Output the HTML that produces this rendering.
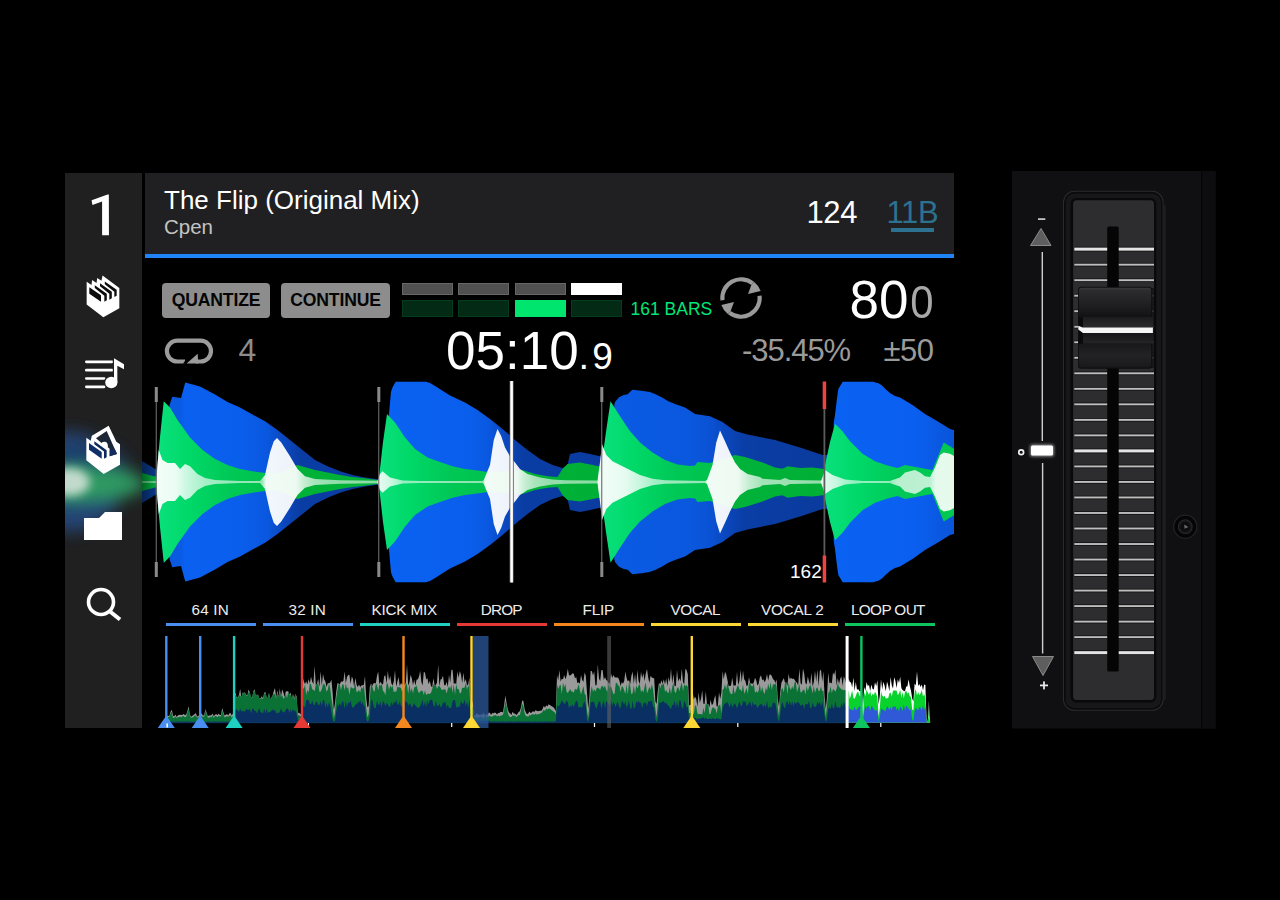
<!DOCTYPE html>
<html><head><meta charset="utf-8"><title>Deck</title>
<style>
*{margin:0;padding:0;box-sizing:border-box}
html,body{width:1280px;height:900px;background:#000;overflow:hidden}
body{position:relative;font-family:"Liberation Sans",sans-serif;color:#fff}
.abs{position:absolute}
.t{position:absolute;white-space:nowrap;line-height:1}
#side{left:65px;top:173px;width:77px;height:555px;background:#202020;overflow:hidden}
#head{left:145px;top:173px;width:809px;height:82px;background:#202022}
#hline{left:145px;top:254px;width:809px;height:4px;background:#1f84f6}
.btn{position:absolute;top:282.5px;height:35px;background:#8d8d8d;border-radius:4px;color:#050505;font-weight:bold;font-size:17.6px;line-height:35.5px;text-align:center;letter-spacing:-0.15px}
.seg{position:absolute;width:51px}
.cl{position:absolute;top:600.5px;letter-spacing:-0.2px;width:110px;text-align:center;font-size:15.3px;color:#ececec;line-height:18px;white-space:nowrap}
.cb{position:absolute;top:623px;height:3px;width:90px}
</style></head><body>

<!-- sidebar -->
<div id="side" class="abs">
<svg class="abs" style="left:0;top:0" width="77" height="555" viewBox="65 173 77 555">
 <defs><filter id="bl" x="-50%" y="-50%" width="200%" height="200%"><feGaussianBlur stdDeviation="8"/></filter><filter id="bl2" x="-100%" y="-100%" width="300%" height="300%"><feGaussianBlur stdDeviation="5"/></filter></defs>
 <g filter="url(#bl)">
  <ellipse cx="68" cy="482" rx="56" ry="50" fill="#23487c" opacity="0.92"/>
  <ellipse cx="92" cy="472" rx="40" ry="30" fill="#1b3a63" opacity="0.55"/>
  <ellipse cx="80" cy="484" rx="66" ry="17" fill="#2d9a62"/>
 </g>
 <g filter="url(#bl2)">
  <ellipse cx="69" cy="482" rx="21" ry="14" fill="#c2dacc"/>
 </g>
</svg>
</div>
<svg class="abs" style="left:0;top:0" width="160" height="260" viewBox="0 0 160 260"><path fill="#fff" d="M108.85,194.4 L108.95,235.2 L102.1,235.2 L102.1,201.6 L92.4,205.1 L91.6,200.3 L107.6,194.4 Z"/></svg>

<!-- crate icon -->
<svg class="abs" style="left:74px;top:265px" width="60" height="60" viewBox="0 0 900 900">
 <path fill="#fff" d="M190,250 L262,300 L272,225 L338,270 L348,195 L412,238 L428,158 L680,345 L680,650 L440,782 L190,592 Z"/>
 <path fill="#0c0c0c" d="M230,335 L405,455 L405,552 L230,432 Z"/>
 <path fill="#0c0c0c" d="M312,305 L492,432 L492,530 L455,550 L455,462 L312,345 Z"/>
 <path fill="#0c0c0c" d="M390,275 L567,402 L567,500 L530,520 L530,430 L390,318 Z"/>
 <path fill="#0c0c0c" d="M462,248 L640,372 L640,460 L605,480 L605,400 L462,290 Z"/>
</svg>

<!-- playlist icon -->
<svg class="abs" style="left:74px;top:345px" width="60" height="60" viewBox="0 0 900 900">
 <g stroke="#fff" stroke-width="40" stroke-linecap="round">
  <line x1="185" y1="252" x2="572" y2="252"/><line x1="185" y1="378" x2="572" y2="378"/>
  <line x1="185" y1="503" x2="452" y2="503"/><line x1="185" y1="628" x2="452" y2="628"/>
 </g>
 <g stroke="#202020" stroke-width="36" fill="#fff" stroke-linejoin="round">
  <path d="M600,200 L750,290 L750,365 L650,310 L650,560 L600,560 Z"/>
  <ellipse cx="560" cy="562" rx="92" ry="85"/>
 </g>
 <path fill="#fff" d="M600,200 L750,290 L750,365 L650,310 L650,560 L600,560 Z"/>
 <ellipse cx="560" cy="562" rx="92" ry="85" fill="#fff"/>
</svg>

<!-- prepare crate icon -->
<svg class="abs" style="left:80px;top:420px" width="48" height="60" viewBox="0 0 720 900">
 <path fill="#fff" d="M95,265 L160,312 L178,238 L430,85 L545,325 L600,365 L600,670 L355,810 L95,605 Z"/>
 <path fill="#1b2636" d="M240,275 L400,165 L555,510 L445,545 L445,432 L418,410 Q425,335 375,325 Q340,322 322,345 Z"/>
 <path fill="#122c5e" d="M445,545 L555,510 L520,430 L445,445 Z"/>
 <path fill="#10306a" d="M135,345 L325,480 L325,580 L135,445 Z"/>
 <path fill="#0d2a60" d="M215,320 L400,455 L400,560 L360,580 L360,472 L215,362 Z"/>
</svg>

<!-- folder icon -->
<svg class="abs" style="left:80px;top:506px" width="46" height="38" viewBox="0 0 46 38">
 <path fill="#fff" d="M4,12 L19,12 L25,6 L42,6 L42,34 L4,34 Z"/>
</svg>

<!-- search icon -->
<svg class="abs" style="left:80px;top:582px" width="48" height="44" viewBox="0 0 48 44">
 <circle cx="21" cy="20" r="12.5" fill="none" stroke="#fff" stroke-width="3.6"/>
 <line x1="30" y1="29.5" x2="40" y2="37.5" stroke="#fff" stroke-width="4" stroke-linecap="butt"/>
</svg>

<!-- header -->
<div id="head" class="abs"></div>
<div id="hline" class="abs"></div>
<div class="t" id="title" style="left:164px;top:187px;font-size:26px;color:#fff">The Flip (Original Mix)</div>
<div class="t" id="artist" style="left:164px;top:217px;font-size:20.5px;color:#c4c4c4">Cpen</div>
<div class="t" id="bpm" style="left:806.5px;top:196.7px;font-size:31px;letter-spacing:-0.4px;color:#fff">124</div>
<div class="t" id="key" style="left:886.5px;top:196.7px;font-size:31px;letter-spacing:-0.4px;color:#2c7190">11B</div>
<div class="abs" style="left:891px;top:228px;width:43px;height:4px;background:#2c7190"></div>

<!-- buttons -->
<div class="btn" id="bq" style="left:162px;width:108px">QUANTIZE</div>
<div class="btn" id="bc" style="left:281px;width:109px">CONTINUE</div>

<!-- phase meter -->
<div class="seg" style="left:401.5px;top:283.4px;height:11.7px;background:#505050;border:1px solid #666"></div>
<div class="seg" style="left:458px;top:283.4px;height:11.7px;background:#505050;border:1px solid #666"></div>
<div class="seg" style="left:514.5px;top:283.4px;height:11.7px;background:#505050;border:1px solid #666"></div>
<div class="seg" style="left:571px;top:283.4px;height:11.7px;background:#fff"></div>
<div class="seg" style="left:401.5px;top:299.5px;height:17.5px;background:#022a14;border:1px solid #053c1c"></div>
<div class="seg" style="left:458px;top:299.5px;height:17.5px;background:#022a14;border:1px solid #053c1c"></div>
<div class="seg" style="left:514.5px;top:299.5px;height:17.5px;background:#00e56e"></div>
<div class="seg" style="left:571px;top:299.5px;height:17.5px;background:#022a14;border:1px solid #053c1c"></div>
<div class="t" id="bars" style="left:630.5px;top:300.5px;font-size:17.5px;color:#00e676">161 BARS</div>

<!-- sync icon -->
<svg class="abs" style="left:711px;top:268px" width="60" height="60" viewBox="711 268 60 60">
 <g id="sy1"><path d="M722.42,300.15 A18.7,18.7 0 0 1 752.64,283.37" fill="none" stroke="#9a9a9a" stroke-width="4.1"/><path d="M753.95,281.72 A20.8,20.8 0 0 1 760.70,291.00 L748.00,294.00 L751.33,285.01 Z" fill="#9a9a9a"/></g>
 <g transform="rotate(180 741 298)"><path d="M722.42,300.15 A18.7,18.7 0 0 1 752.64,283.37" fill="none" stroke="#9a9a9a" stroke-width="4.1"/><path d="M753.95,281.72 A20.8,20.8 0 0 1 760.70,291.00 L748.00,294.00 L751.33,285.01 Z" fill="#9a9a9a"/></g>
</svg>

<!-- loop icon -->
<svg class="abs" style="left:155px;top:325px" width="120" height="50" viewBox="155 325 120 50">
 <path fill="none" stroke="#9c9c9c" stroke-width="4.2" d="M185.2,361.5 L177.3,361.5 A10.4,10.4 0 0 1 177.3,340.7 L200.6,340.7 A10.4,10.4 0 0 1 200.6,361.5 L196,361.5"/>
 <path fill="#9c9c9c" d="M186.6,363.6 L197.7,353.8 L198.2,363.6 Z"/>
 <path fill="#000" d="M186.2,359 L183,363.8 L186.5,363.8 Z"/>
</svg>
<div class="t" id="l4" style="left:238.5px;top:333.5px;font-size:32px;color:#8c8c8c">4</div>

<!-- time -->
<div class="t" id="time" style="left:446px;top:324px;font-size:53px;color:#fff">05:10</div>
<div class="t" id="time2" style="left:578.5px;top:337px;font-size:38px;color:#fff">.</div><div class="t" id="time3" style="left:592.3px;top:337.5px;font-size:37px;color:#fff">9</div>

<div class="t" id="bpm2" style="left:849.5px;top:273px;font-size:53px;color:#fff">80</div>
<div class="t" id="bpm3" style="left:908.5px;top:278.5px;font-size:46.5px;color:#a8a8a8;transform:scaleX(0.9);transform-origin:50% 50%">0</div>
<div class="t" id="pct" style="left:742px;top:335px;font-size:31px;letter-spacing:-1.05px;color:#9a9a9a">-35.45%</div>
<div class="t" id="rng" style="left:883.5px;top:335px;font-size:31px;letter-spacing:-0.5px;color:#9a9a9a">±50</div>

<!-- main waveform + overview -->
<svg class="abs" style="left:0;top:0" width="1280" height="900" viewBox="0 0 1280 900">
 <defs>
  <linearGradient id="gb" gradientUnits="userSpaceOnUse" x1="142" y1="0" x2="954" y2="0">
   <stop offset="0.0000" stop-color="#0a3a8c"/>
   <stop offset="0.0296" stop-color="#0a3a8c"/>
   <stop offset="0.0340" stop-color="#0a58de"/>
   <stop offset="0.0468" stop-color="#0a5ae2"/>
   <stop offset="0.0530" stop-color="#0a60f0"/>
   <stop offset="0.1207" stop-color="#0a5eec"/>
   <stop offset="0.1527" stop-color="#0a58e0"/>
   <stop offset="0.1736" stop-color="#0a48c0"/>
   <stop offset="0.1946" stop-color="#0a3da4"/>
   <stop offset="0.2993" stop-color="#0a3ca0"/>
   <stop offset="0.3036" stop-color="#0a62f2"/>
   <stop offset="0.4039" stop-color="#0a5eec"/>
   <stop offset="0.4261" stop-color="#0a58e0"/>
   <stop offset="0.4470" stop-color="#0a48c0"/>
   <stop offset="0.4680" stop-color="#0a3da4"/>
   <stop offset="0.5788" stop-color="#0a3ca0"/>
   <stop offset="0.5813" stop-color="#0a5ae4"/>
   <stop offset="0.6749" stop-color="#0a58de"/>
   <stop offset="0.6995" stop-color="#0a52d4"/>
   <stop offset="0.7204" stop-color="#0a46bc"/>
   <stop offset="0.7414" stop-color="#0a3ea6"/>
   <stop offset="0.8498" stop-color="#0a3a9c"/>
   <stop offset="0.8522" stop-color="#0a62f2"/>
   <stop offset="0.9520" stop-color="#0a5ff0"/>
   <stop offset="1.0000" stop-color="#0a54d8"/>
  </linearGradient>
  <linearGradient id="gg" gradientUnits="userSpaceOnUse" x1="142" y1="0" x2="954" y2="0">
   <stop offset="0.0000" stop-color="#00a838"/>
   <stop offset="0.0172" stop-color="#00b040"/>
   <stop offset="0.0197" stop-color="#0ae07c"/>
   <stop offset="0.0591" stop-color="#00d868"/>
   <stop offset="0.1084" stop-color="#00c856"/>
   <stop offset="0.1527" stop-color="#00c24c"/>
   <stop offset="0.1823" stop-color="#00b238"/>
   <stop offset="0.2894" stop-color="#00b036"/>
   <stop offset="0.2919" stop-color="#0ae07c"/>
   <stop offset="0.3300" stop-color="#00d868"/>
   <stop offset="0.3793" stop-color="#00c856"/>
   <stop offset="0.4261" stop-color="#00c24c"/>
   <stop offset="0.4557" stop-color="#00b238"/>
   <stop offset="0.5640" stop-color="#00b036"/>
   <stop offset="0.5665" stop-color="#0ae07c"/>
   <stop offset="0.6071" stop-color="#00d868"/>
   <stop offset="0.6564" stop-color="#00c856"/>
   <stop offset="0.6995" stop-color="#00c24c"/>
   <stop offset="0.7303" stop-color="#00b23a"/>
   <stop offset="0.8387" stop-color="#00b036"/>
   <stop offset="0.8411" stop-color="#0ae07c"/>
   <stop offset="0.8842" stop-color="#00d868"/>
   <stop offset="0.9335" stop-color="#00c856"/>
   <stop offset="1.0000" stop-color="#00c850"/>
  </linearGradient>
  <linearGradient id="gw" gradientUnits="userSpaceOnUse" x1="142" y1="0" x2="954" y2="0"><stop offset="0.0000" stop-color="#fff" stop-opacity="0.4"/><stop offset="0.0166" stop-color="#fff" stop-opacity="0.45"/><stop offset="0.0176" stop-color="#fff" stop-opacity="0.95"/><stop offset="0.0419" stop-color="#fff" stop-opacity="0.92"/><stop offset="0.0542" stop-color="#fff" stop-opacity="0.8"/><stop offset="0.0653" stop-color="#fff" stop-opacity="0.72"/><stop offset="0.0800" stop-color="#fff" stop-opacity="0.64"/><stop offset="0.1108" stop-color="#fff" stop-opacity="0.58"/><stop offset="0.1478" stop-color="#fff" stop-opacity="0.58"/><stop offset="0.1527" stop-color="#fff" stop-opacity="0.95"/><stop offset="0.1897" stop-color="#fff" stop-opacity="0.93"/><stop offset="0.1995" stop-color="#fff" stop-opacity="0.78"/><stop offset="0.2118" stop-color="#fff" stop-opacity="0.66"/><stop offset="0.2340" stop-color="#fff" stop-opacity="0.58"/><stop offset="0.2894" stop-color="#fff" stop-opacity="0.55"/><stop offset="0.2913" stop-color="#fff" stop-opacity="0.9"/><stop offset="0.3054" stop-color="#fff" stop-opacity="0.8"/><stop offset="0.3227" stop-color="#fff" stop-opacity="0.58"/><stop offset="0.4200" stop-color="#fff" stop-opacity="0.55"/><stop offset="0.4224" stop-color="#fff" stop-opacity="0.95"/><stop offset="0.4618" stop-color="#fff" stop-opacity="0.93"/><stop offset="0.4717" stop-color="#fff" stop-opacity="0.78"/><stop offset="0.4840" stop-color="#fff" stop-opacity="0.66"/><stop offset="0.5049" stop-color="#fff" stop-opacity="0.58"/><stop offset="0.5603" stop-color="#fff" stop-opacity="0.55"/><stop offset="0.5622" stop-color="#fff" stop-opacity="0.95"/><stop offset="0.5948" stop-color="#fff" stop-opacity="0.9"/><stop offset="0.6133" stop-color="#fff" stop-opacity="0.78"/><stop offset="0.6342" stop-color="#fff" stop-opacity="0.62"/><stop offset="0.6933" stop-color="#fff" stop-opacity="0.58"/><stop offset="0.6964" stop-color="#fff" stop-opacity="0.95"/><stop offset="0.7340" stop-color="#fff" stop-opacity="0.93"/><stop offset="0.7463" stop-color="#fff" stop-opacity="0.78"/><stop offset="0.7635" stop-color="#fff" stop-opacity="0.64"/><stop offset="0.8350" stop-color="#fff" stop-opacity="0.58"/><stop offset="0.8368" stop-color="#fff" stop-opacity="0.9"/><stop offset="0.8534" stop-color="#fff" stop-opacity="0.78"/><stop offset="0.8744" stop-color="#fff" stop-opacity="0.58"/><stop offset="0.9212" stop-color="#fff" stop-opacity="0.58"/><stop offset="0.9298" stop-color="#fff" stop-opacity="0.72"/><stop offset="0.9704" stop-color="#fff" stop-opacity="0.74"/><stop offset="0.9778" stop-color="#fff" stop-opacity="0.9"/><stop offset="1.0000" stop-color="#fff" stop-opacity="0.9"/></linearGradient>
  <linearGradient id="fadeL" gradientUnits="userSpaceOnUse" x1="142" y1="0" x2="157" y2="0">
   <stop offset="0" stop-color="#000" stop-opacity="0.4"/><stop offset="1" stop-color="#000" stop-opacity="0"/>
  </linearGradient>
 </defs>
 <path d="M142.00,482.00 L142.00,461.00 L156.00,469.50 L166.00,470.00 L169.50,405.00 L172.25,396.75 L181.00,398.00 L185.25,382.50 L200.00,386.50 L215.00,394.50 L227.50,402.00 L240.00,407.50 L252.50,414.50 L265.00,421.25 L277.50,430.00 L290.00,440.00 L302.50,450.00 L315.00,460.00 L327.50,466.25 L340.00,471.25 L352.50,475.00 L365.00,477.50 L377.50,479.25 L388.50,479.50 L389.00,414.00 L391.00,391.70 L392.70,387.00 L395.70,381.70 L426.00,381.70 L430.00,383.00 L436.70,387.00 L443.30,391.20 L450.00,395.50 L465.00,402.50 L477.50,410.00 L490.00,419.00 L502.50,429.00 L515.00,440.00 L527.50,450.00 L540.00,459.00 L552.50,465.00 L562.50,468.00 L567.50,465.00 L570.00,454.00 L580.00,452.00 L590.00,454.00 L600.00,456.25 L613.50,457.00 L614.30,404.70 L615.00,402.00 L619.00,397.30 L623.70,395.00 L627.70,394.30 L632.30,389.70 L641.70,390.70 L649.70,392.00 L655.00,394.00 L661.70,397.30 L668.30,401.30 L675.00,404.00 L685.00,407.50 L695.00,414.00 L710.00,416.25 L722.50,422.00 L735.00,431.00 L747.50,434.50 L760.00,437.00 L775.00,440.00 L800.00,447.50 L822.50,455.00 L833.50,455.00 L833.70,423.00 L835.00,415.00 L837.00,398.30 L838.30,389.00 L842.70,381.70 L873.00,381.70 L878.30,383.30 L881.70,385.30 L885.70,389.30 L890.30,393.30 L895.00,396.00 L900.00,397.50 L912.50,405.00 L925.00,414.00 L937.50,421.25 L950.00,429.00 L954.00,430.00 L954.00,534.00 L950.00,535.00 L937.50,542.75 L925.00,550.00 L912.50,559.00 L900.00,566.50 L895.00,568.00 L890.30,570.70 L885.70,574.70 L881.70,578.70 L878.30,580.70 L873.00,582.30 L842.70,582.30 L838.30,575.00 L837.00,565.70 L835.00,549.00 L833.70,541.00 L833.50,509.00 L822.50,509.00 L800.00,516.50 L775.00,524.00 L760.00,527.00 L747.50,529.50 L735.00,533.00 L722.50,542.00 L710.00,547.75 L695.00,550.00 L685.00,556.50 L675.00,560.00 L668.30,562.70 L661.70,566.70 L655.00,570.00 L649.70,572.00 L641.70,573.30 L632.30,574.30 L627.70,569.70 L623.70,569.00 L619.00,566.70 L615.00,562.00 L614.30,559.30 L613.50,507.00 L600.00,507.75 L590.00,510.00 L580.00,512.00 L570.00,510.00 L567.50,499.00 L562.50,496.00 L552.50,499.00 L540.00,505.00 L527.50,514.00 L515.00,524.00 L502.50,535.00 L490.00,545.00 L477.50,554.00 L465.00,561.50 L450.00,568.50 L443.30,572.80 L436.70,577.00 L430.00,581.00 L426.00,582.30 L395.70,582.30 L392.70,577.00 L391.00,572.30 L389.00,550.00 L388.50,484.50 L377.50,484.75 L365.00,486.50 L352.50,489.00 L340.00,492.75 L327.50,497.75 L315.00,504.00 L302.50,514.00 L290.00,524.00 L277.50,534.00 L265.00,542.75 L252.50,549.50 L240.00,556.50 L227.50,562.00 L215.00,569.50 L200.00,577.50 L185.25,581.50 L181.00,566.00 L172.25,567.25 L169.50,559.00 L166.00,494.00 L156.00,494.50 L142.00,503.00 Z" fill="url(#gb)"/>
 <path d="M142.00,482.00 L142.00,473.00 L155.00,476.50 L156.25,476.50 L160.00,437.00 L163.75,401.25 L170.00,407.50 L177.50,420.00 L190.00,437.50 L202.50,450.00 L215.00,459.00 L227.50,465.00 L240.00,469.00 L252.50,471.25 L265.00,473.00 L280.00,473.00 L290.00,468.00 L297.50,465.00 L315.00,470.00 L327.50,472.50 L340.00,475.00 L352.50,477.00 L365.00,478.25 L377.50,480.00 L378.75,480.00 L383.00,442.00 L387.00,414.00 L395.00,422.50 L405.00,437.50 L415.00,449.00 L427.50,457.50 L440.00,462.00 L452.50,466.25 L465.00,469.00 L477.50,470.50 L487.50,472.00 L510.00,471.00 L522.50,470.00 L535.00,474.00 L547.50,476.25 L557.50,477.00 L562.50,469.00 L567.50,464.00 L580.00,462.50 L590.00,464.50 L598.75,466.25 L601.25,466.25 L606.00,432.00 L610.50,401.25 L620.00,416.25 L630.00,431.25 L640.00,442.50 L652.50,452.50 L665.00,460.00 L677.50,464.50 L690.00,466.00 L695.00,465.50 L697.50,462.00 L710.00,463.00 L725.00,458.00 L735.00,455.00 L745.00,457.00 L762.50,462.50 L775.00,467.50 L782.50,468.75 L787.50,466.25 L800.00,468.00 L812.50,467.50 L822.50,468.75 L824.25,468.75 L830.00,442.00 L835.00,423.75 L842.50,431.25 L850.00,441.25 L862.50,453.75 L875.00,461.25 L887.50,465.50 L897.50,468.00 L905.00,465.00 L925.00,468.75 L932.50,470.00 L937.50,457.50 L943.75,442.50 L954.00,448.75 L954.00,515.25 L943.75,521.50 L937.50,506.50 L932.50,494.00 L925.00,495.25 L905.00,499.00 L897.50,496.00 L887.50,498.50 L875.00,502.75 L862.50,510.25 L850.00,522.75 L842.50,532.75 L835.00,540.25 L830.00,522.00 L824.25,495.25 L822.50,495.25 L812.50,496.50 L800.00,496.00 L787.50,497.75 L782.50,495.25 L775.00,496.50 L762.50,501.50 L745.00,507.00 L735.00,509.00 L725.00,506.00 L710.00,501.00 L697.50,502.00 L695.00,498.50 L690.00,498.00 L677.50,499.50 L665.00,504.00 L652.50,511.50 L640.00,521.50 L630.00,532.75 L620.00,547.75 L610.50,562.75 L606.00,532.00 L601.25,497.75 L598.75,497.75 L590.00,499.50 L580.00,501.50 L567.50,500.00 L562.50,495.00 L557.50,487.00 L547.50,487.75 L535.00,490.00 L522.50,494.00 L510.00,493.00 L487.50,492.00 L477.50,493.50 L465.00,495.00 L452.50,497.75 L440.00,502.00 L427.50,506.50 L415.00,515.00 L405.00,526.50 L395.00,541.50 L387.00,550.00 L383.00,522.00 L378.75,484.00 L377.50,484.00 L365.00,485.75 L352.50,487.00 L340.00,489.00 L327.50,491.50 L315.00,494.00 L297.50,499.00 L290.00,496.00 L280.00,491.00 L265.00,491.00 L252.50,492.75 L240.00,495.00 L227.50,499.00 L215.00,505.00 L202.50,514.00 L190.00,526.50 L177.50,544.00 L170.00,556.50 L163.75,562.75 L160.00,527.00 L156.25,487.50 L155.00,487.50 L142.00,491.00 Z" fill="url(#gg)"/>
 <path d="M142.00,482.00 L142.00,481.00 L155.00,481.00 L156.25,480.80 L158.75,450.00 L162.50,460.00 L167.50,463.00 L175.00,463.00 L180.00,469.00 L185.00,464.00 L190.00,466.25 L197.50,474.00 L205.00,478.00 L215.00,480.00 L240.00,481.00 L260.00,481.00 L265.00,475.00 L270.00,452.50 L273.75,441.25 L277.00,438.00 L281.25,442.50 L290.00,456.25 L297.50,469.00 L305.00,476.25 L315.00,479.00 L340.00,480.25 L377.50,480.75 L380.00,474.00 L382.50,471.25 L390.00,477.50 L402.50,480.50 L420.00,481.00 L482.50,481.00 L483.75,480.00 L490.00,465.00 L493.75,440.00 L497.50,429.00 L501.25,436.25 L505.00,447.50 L510.00,456.25 L515.00,462.50 L520.00,469.00 L527.50,474.00 L540.00,477.50 L552.50,479.50 L565.00,480.25 L595.00,480.50 L597.50,480.50 L600.00,462.00 L602.00,444.00 L606.25,455.00 L612.50,461.25 L620.00,465.00 L630.00,470.00 L640.00,475.00 L652.50,478.75 L665.00,480.25 L705.00,481.00 L707.00,480.00 L712.50,465.00 L716.25,442.50 L720.00,430.50 L725.00,441.25 L730.00,452.50 L735.00,462.50 L740.00,469.00 L747.50,474.00 L760.00,477.00 L762.50,478.75 L780.00,480.00 L785.00,478.00 L790.00,480.00 L820.00,480.50 L821.25,480.50 L825.00,470.00 L832.50,475.00 L845.00,479.50 L862.50,481.00 L890.00,481.00 L892.50,480.00 L900.00,477.50 L905.00,472.50 L915.00,470.00 L920.00,472.50 L925.00,476.25 L930.00,477.00 L935.00,467.50 L940.00,455.00 L943.75,452.50 L950.00,453.75 L954.00,456.00 L954.00,508.00 L950.00,510.25 L943.75,511.50 L940.00,509.00 L935.00,496.50 L930.00,487.00 L925.00,487.75 L920.00,491.50 L915.00,494.00 L905.00,491.50 L900.00,486.50 L892.50,484.00 L890.00,483.00 L862.50,483.00 L845.00,484.50 L832.50,489.00 L825.00,494.00 L821.25,483.50 L820.00,483.50 L790.00,484.00 L785.00,486.00 L780.00,484.00 L762.50,485.25 L760.00,487.00 L747.50,490.00 L740.00,495.00 L735.00,501.50 L730.00,511.50 L725.00,522.75 L720.00,533.50 L716.25,521.50 L712.50,499.00 L707.00,484.00 L705.00,483.00 L665.00,483.75 L652.50,485.25 L640.00,489.00 L630.00,494.00 L620.00,499.00 L612.50,502.75 L606.25,509.00 L602.00,520.00 L600.00,502.00 L597.50,483.50 L595.00,483.50 L565.00,483.75 L552.50,484.50 L540.00,486.50 L527.50,490.00 L520.00,495.00 L515.00,501.50 L510.00,507.75 L505.00,516.50 L501.25,527.75 L497.50,535.00 L493.75,524.00 L490.00,499.00 L483.75,484.00 L482.50,483.00 L420.00,483.00 L402.50,483.50 L390.00,486.50 L382.50,492.75 L380.00,490.00 L377.50,483.25 L340.00,483.75 L315.00,485.00 L305.00,487.75 L297.50,495.00 L290.00,507.75 L281.25,521.50 L277.00,526.00 L273.75,522.75 L270.00,511.50 L265.00,489.00 L260.00,483.00 L240.00,483.00 L215.00,484.00 L205.00,486.00 L197.50,490.00 L190.00,497.75 L185.00,500.00 L180.00,495.00 L175.00,501.00 L167.50,501.00 L162.50,504.00 L158.75,514.00 L156.25,483.20 L155.00,483.00 L142.00,483.00 Z" fill="url(#gw)"/>
 <rect x="142" y="440" width="15" height="90" fill="url(#fadeL)"/>

 <!-- beat markers -->
 <g fill="#8a8a8a">
  <rect x="155.7" y="402" width="1.1" height="160" fill="#6a6a6a"/><rect x="154.8" y="387" width="3" height="15"/><rect x="154.8" y="562" width="3" height="15"/>
  <rect x="378.2" y="402" width="1.1" height="160" fill="#6a6a6a"/><rect x="377.3" y="387" width="3" height="15"/><rect x="377.3" y="562" width="3" height="15"/>
  <rect x="601.2" y="402" width="1.1" height="160" fill="#6a6a6a"/><rect x="600.3" y="387" width="3" height="15"/><rect x="600.3" y="562" width="3" height="15"/>
 </g>
 <rect x="823.5" y="409" width="1.8" height="147" fill="#5c5c5c"/>
 <rect x="822.7" y="381.5" width="3.5" height="27.5" fill="#ee4444"/>
 <rect x="822.7" y="555.5" width="3.5" height="27" fill="#ee4444"/>
 <!-- playhead -->
 <rect x="509.5" y="381" width="4.2" height="201.5" fill="#555"/>
 <rect x="510.3" y="381" width="2.6" height="201.5" fill="#fff"/>

 <!-- overview -->
 
<path d="M167.0,722.4L167.0,715.8L168.2,716.0L169.4,715.7L170.6,711.8L171.8,709.8L173.0,715.6L174.2,716.4L175.4,714.5L176.6,716.9L177.8,715.4L179.0,715.1L180.2,714.7L181.4,714.9L182.6,714.7L183.8,714.0L185.0,715.2L186.2,714.4L187.4,710.9L188.6,706.2L189.8,714.5L191.0,716.8L192.2,715.9L193.4,715.0L194.6,714.2L195.8,713.1L197.0,716.2L198.2,716.4L199.4,714.1L200.6,714.3L201.8,713.5L203.0,715.8L204.2,715.1L205.4,709.3L206.6,712.6L207.8,716.2L209.0,715.6L210.2,715.6L211.4,715.2L212.6,713.6L213.8,716.3L215.0,714.7L216.2,714.1L217.4,715.3L218.6,713.6L219.8,715.1L221.0,714.9L222.2,708.0L223.4,712.2L224.6,715.5L225.8,714.8L227.0,713.9L228.2,715.5L229.4,713.3L230.6,713.3L231.8,715.4L233.0,713.3L234.2,694.8L235.4,692.8L236.6,697.6L237.8,697.1L239.0,695.1L240.2,688.8L241.4,697.9L242.6,692.8L243.8,692.8L245.0,692.6L246.2,695.1L247.4,695.2L248.6,689.5L249.8,692.4L251.0,697.4L252.2,697.3L253.4,691.3L254.6,689.3L255.8,696.6L257.0,694.6L258.2,695.1L259.4,698.5L260.6,698.2L261.8,696.3L263.0,698.2L264.2,692.7L265.4,691.9L266.6,697.2L267.8,698.1L269.0,693.0L270.2,699.3L271.4,697.6L272.6,695.5L273.8,690.9L275.0,687.9L276.2,697.9L277.4,690.4L278.6,696.7L279.8,688.5L281.0,696.7L282.2,689.2L283.4,692.5L284.6,697.0L285.8,691.5L287.0,691.3L288.2,691.2L289.4,694.7L290.6,692.6L291.8,699.2L293.0,694.1L294.2,698.2L295.4,693.9L296.6,696.2L297.8,713.4L299.0,712.4L300.2,713.8L301.4,714.4L302.6,676.7L303.8,681.2L305.0,684.3L306.2,681.3L307.4,684.4L308.6,679.0L309.8,683.5L311.0,676.4L312.2,681.8L313.4,683.9L314.6,666.1L315.8,684.9L317.0,684.1L318.2,678.8L319.4,686.9L320.6,671.2L321.8,685.5L323.0,674.1L324.2,679.6L325.4,681.4L326.6,686.9L327.8,683.3L329.0,683.3L330.2,682.4L331.4,679.4L332.6,692.1L333.8,709.9L335.0,703.8L336.2,692.0L337.4,683.3L338.6,683.4L339.8,684.6L341.0,681.5L342.2,681.8L343.4,681.0L344.6,671.4L345.8,683.3L347.0,676.9L348.2,675.1L349.4,674.7L350.6,683.9L351.8,676.5L353.0,678.9L354.2,687.2L355.4,677.7L356.6,684.7L357.8,687.1L359.0,684.6L360.2,687.0L361.4,685.4L362.6,685.3L363.8,684.9L365.0,675.9L366.2,697.4L367.4,707.2L368.6,706.3L369.8,686.9L371.0,683.5L372.2,686.1L373.4,683.4L374.6,683.1L375.8,683.4L377.0,675.7L378.2,671.6L379.4,684.2L380.6,681.7L381.8,683.9L383.0,684.4L384.2,676.2L385.4,675.3L386.6,683.7L387.8,670.7L389.0,680.7L390.2,675.7L391.4,683.5L392.6,685.6L393.8,681.5L395.0,670.1L396.2,686.7L397.4,681.5L398.6,677.1L399.8,686.3L401.0,682.8L402.2,684.7L403.4,683.5L404.6,684.9L405.8,683.1L407.0,664.1L408.2,685.5L409.4,682.8L410.6,674.8L411.8,678.2L413.0,685.3L414.2,679.7L415.4,685.5L416.6,679.6L417.8,679.6L419.0,676.6L420.2,670.7L421.4,682.0L422.6,685.4L423.8,672.0L425.0,672.4L426.2,679.5L427.4,678.1L428.6,684.2L429.8,680.7L431.0,686.2L432.2,686.9L433.4,678.2L434.6,685.1L435.8,685.1L437.0,682.6L438.2,664.5L439.4,685.9L440.6,679.6L441.8,678.9L443.0,675.5L444.2,684.9L445.4,685.6L446.6,681.8L447.8,687.0L449.0,674.8L450.2,682.7L451.4,669.7L452.6,670.0L453.8,684.0L455.0,683.1L456.2,684.2L457.4,671.5L458.6,677.8L459.8,671.1L461.0,674.7L462.2,683.0L463.4,672.4L464.6,682.4L465.8,679.0L467.0,685.6L468.2,684.6L469.4,677.3L470.6,705.8L471.8,699.5L473.0,704.0L474.2,715.2L475.4,715.7L476.6,713.1L477.8,714.3L479.0,714.5L480.2,715.3L481.4,713.9L482.6,714.7L483.8,712.4L485.0,715.8L486.2,714.3L487.4,714.4L488.6,712.7L489.8,712.8L491.0,714.9L492.2,713.0L493.4,713.4L494.6,712.5L495.8,712.9L497.0,714.5L498.2,713.1L499.4,712.9L500.6,711.7L501.8,711.9L503.0,712.3L504.2,704.8L505.4,695.4L506.6,703.3L507.8,709.5L509.0,712.6L510.2,713.4L511.4,714.9L512.6,711.7L513.8,713.5L515.0,713.4L516.2,715.0L517.4,714.0L518.6,712.0L519.8,711.3L521.0,707.2L522.2,700.4L523.4,701.1L524.6,709.1L525.8,712.2L527.0,714.3L528.2,713.5L529.4,711.6L530.6,713.1L531.8,712.6L533.0,711.0L534.2,712.3L535.4,710.2L536.6,710.7L537.8,711.3L539.0,711.0L540.2,710.8L541.4,710.7L542.6,709.1L543.8,705.7L545.0,707.7L546.2,705.2L547.4,706.6L548.6,704.3L549.8,705.0L551.0,705.7L552.2,706.5L553.4,707.2L554.6,708.7L555.8,711.2L557.0,675.2L558.2,680.4L559.4,670.1L560.6,681.6L561.8,678.7L563.0,679.2L564.2,675.1L565.4,679.2L566.6,675.8L567.8,668.8L569.0,675.3L570.2,675.5L571.4,674.6L572.6,673.2L573.8,673.8L575.0,678.4L576.2,676.8L577.4,683.2L578.6,682.2L579.8,683.8L581.0,675.0L582.2,680.0L583.4,682.1L584.6,672.6L585.8,675.8L587.0,692.8L588.2,709.0L589.4,697.1L590.6,671.1L591.8,671.0L593.0,675.6L594.2,671.3L595.4,685.3L596.6,685.2L597.8,664.2L599.0,678.4L600.2,681.1L601.4,670.0L602.6,670.1L603.8,679.9L605.0,677.1L606.2,680.1L607.4,680.8L608.6,683.2L609.8,683.5L611.0,673.4L612.2,677.9L613.4,675.0L614.6,677.2L615.8,677.4L617.0,677.4L618.2,677.7L619.4,680.4L620.6,686.2L621.8,681.9L623.0,683.7L624.2,680.9L625.4,671.6L626.6,678.1L627.8,681.6L629.0,680.0L630.2,684.3L631.4,675.8L632.6,671.6L633.8,683.9L635.0,673.8L636.2,685.2L637.4,670.1L638.6,681.0L639.8,684.1L641.0,671.8L642.2,678.1L643.4,673.3L644.6,681.1L645.8,673.6L647.0,669.1L648.2,677.5L649.4,682.9L650.6,675.8L651.8,677.5L653.0,677.9L654.2,678.6L655.4,701.4L656.6,703.9L657.8,690.7L659.0,682.7L660.2,684.4L661.4,680.3L662.6,684.1L663.8,679.2L665.0,684.6L666.2,678.3L667.4,686.2L668.6,676.9L669.8,682.3L671.0,668.6L672.2,683.6L673.4,674.0L674.6,686.2L675.8,686.1L677.0,669.7L678.2,681.5L679.4,678.3L680.6,681.5L681.8,668.6L683.0,682.2L684.2,683.9L685.4,668.8L686.6,669.9L687.8,674.2L689.0,705.2L690.2,704.9L691.4,704.0L692.6,691.1L693.8,699.6L695.0,696.4L696.2,699.0L697.4,706.4L698.6,692.2L699.8,702.7L701.0,698.8L702.2,690.3L703.4,703.7L704.6,703.9L705.8,691.2L707.0,704.8L708.2,703.8L709.4,707.4L710.6,699.8L711.8,705.0L713.0,704.0L714.2,698.7L715.4,695.0L716.6,706.3L717.8,706.4L719.0,692.3L720.2,699.1L721.4,692.8L722.6,671.0L723.8,679.3L725.0,671.7L726.2,674.3L727.4,679.7L728.6,686.3L729.8,685.7L731.0,685.7L732.2,677.6L733.4,685.5L734.6,685.4L735.8,685.5L737.0,671.8L738.2,685.0L739.4,681.0L740.6,669.9L741.8,682.5L743.0,670.6L744.2,679.2L745.4,681.0L746.6,686.0L747.8,685.3L749.0,676.9L750.2,683.3L751.4,683.5L752.6,683.8L753.8,682.4L755.0,677.7L756.2,680.2L757.4,685.4L758.6,683.9L759.8,677.4L761.0,675.2L762.2,680.2L763.4,679.3L764.6,682.2L765.8,679.7L767.0,673.9L768.2,680.7L769.4,674.7L770.6,674.6L771.8,676.0L773.0,679.2L774.2,680.0L775.4,682.9L776.6,679.5L777.8,699.4L779.0,706.7L780.2,692.9L781.4,682.7L782.6,680.6L783.8,678.1L785.0,682.7L786.2,682.3L787.4,686.1L788.6,673.8L789.8,679.2L791.0,677.7L792.2,679.1L793.4,678.4L794.6,679.8L795.8,681.8L797.0,682.8L798.2,685.6L799.4,668.6L800.6,683.2L801.8,684.7L803.0,668.6L804.2,673.5L805.4,683.0L806.6,684.6L807.8,676.6L809.0,681.2L810.2,684.8L811.4,672.7L812.6,686.4L813.8,682.2L815.0,670.8L816.2,681.7L817.4,669.4L818.6,686.2L819.8,670.9L821.0,669.4L822.2,681.6L823.4,671.5L824.6,696.7L825.8,709.0L827.0,697.2L828.2,672.6L829.4,683.3L830.6,682.4L831.8,683.5L833.0,672.4L834.2,675.0L835.4,669.6L836.6,685.4L837.8,677.9L839.0,684.3L840.2,678.8L841.4,676.4L842.6,685.8L843.8,676.3L845.0,679.6L846.2,684.2L846.2,722.4Z" fill="#9a9a9a"/>
<path d="M167.0,722.4L167.0,717.7L168.2,717.1L169.4,716.8L170.6,713.0L171.8,711.7L173.0,717.9L174.2,717.8L175.4,716.5L176.6,718.0L177.8,716.9L179.0,717.3L180.2,716.5L181.4,717.3L182.6,715.9L183.8,716.2L185.0,717.3L186.2,716.7L187.4,712.0L188.6,708.4L189.8,715.6L191.0,717.8L192.2,717.5L193.4,716.9L194.6,715.6L195.8,715.5L197.0,717.5L198.2,717.4L199.4,716.5L200.6,716.3L201.8,715.9L203.0,717.0L204.2,716.4L205.4,710.3L206.6,713.6L207.8,717.6L209.0,717.8L210.2,716.7L211.4,717.4L212.6,715.3L213.8,718.1L215.0,716.1L216.2,715.9L217.4,717.5L218.6,715.8L219.8,716.6L221.0,716.3L222.2,710.4L223.4,713.5L224.6,717.4L225.8,716.8L227.0,716.2L228.2,716.8L229.4,715.8L230.6,715.4L231.8,717.7L233.0,715.7L234.2,694.8L235.4,695.0L236.6,697.7L237.8,697.3L239.0,695.6L240.2,695.2L241.4,697.9L242.6,693.3L243.8,692.9L245.0,693.0L246.2,695.7L247.4,695.6L248.6,692.1L249.8,692.4L251.0,697.4L252.2,698.1L253.4,691.3L254.6,691.1L255.8,696.6L257.0,694.8L258.2,695.1L259.4,698.6L260.6,698.4L261.8,698.2L263.0,699.0L264.2,694.1L265.4,692.2L266.6,697.2L267.8,698.1L269.0,693.1L270.2,699.3L271.4,697.8L272.6,695.8L273.8,693.7L275.0,694.1L276.2,698.8L277.4,692.4L278.6,697.0L279.8,691.4L281.0,696.8L282.2,695.2L283.4,698.7L284.6,697.5L285.8,693.4L287.0,698.2L288.2,691.9L289.4,695.0L290.6,694.5L291.8,699.2L293.0,694.7L294.2,699.4L295.4,693.9L296.6,697.2L297.8,715.6L299.0,714.9L300.2,716.4L301.4,715.4L302.6,687.0L303.8,688.9L305.0,684.3L306.2,695.0L307.4,689.7L308.6,692.6L309.8,683.5L311.0,684.3L312.2,689.2L313.4,689.7L314.6,691.3L315.8,684.9L317.0,684.2L318.2,683.0L319.4,691.8L320.6,691.7L321.8,688.9L323.0,684.4L324.2,683.7L325.4,686.2L326.6,691.7L327.8,689.4L329.0,683.3L330.2,688.4L331.4,698.6L332.6,705.8L333.8,718.5L335.0,712.7L336.2,697.9L337.4,690.6L338.6,683.4L339.8,684.6L341.0,690.3L342.2,684.5L343.4,684.2L344.6,690.4L345.8,683.3L347.0,688.8L348.2,687.3L349.4,694.7L350.6,687.3L351.8,687.4L353.0,688.8L354.2,687.8L355.4,683.5L356.6,692.3L357.8,691.4L359.0,690.1L360.2,692.4L361.4,686.8L362.6,689.0L363.8,685.2L365.0,695.7L366.2,707.7L367.4,717.3L368.6,714.6L369.8,699.0L371.0,683.8L372.2,686.1L373.4,690.6L374.6,691.8L375.8,683.4L377.0,685.1L378.2,690.6L379.4,684.2L380.6,685.8L381.8,683.9L383.0,691.0L384.2,692.0L385.4,695.2L386.6,683.7L387.8,683.5L389.0,689.9L390.2,685.4L391.4,687.8L392.6,685.6L393.8,692.2L395.0,691.2L396.2,692.0L397.4,686.5L398.6,687.6L399.8,687.1L401.0,688.3L402.2,692.2L403.4,688.1L404.6,689.0L405.8,683.1L407.0,684.9L408.2,693.7L409.4,683.8L410.6,692.0L411.8,687.9L413.0,693.5L414.2,687.2L415.4,686.9L416.6,685.5L417.8,690.4L419.0,693.2L420.2,691.4L421.4,690.8L422.6,690.7L423.8,695.1L425.0,690.2L426.2,695.0L427.4,694.1L428.6,693.4L429.8,693.9L431.0,692.8L432.2,689.3L433.4,684.1L434.6,685.6L435.8,685.1L437.0,688.9L438.2,686.3L439.4,685.9L440.6,687.9L441.8,690.1L443.0,689.7L444.2,689.2L445.4,689.6L446.6,693.6L447.8,689.0L449.0,686.2L450.2,689.0L451.4,684.7L452.6,692.8L453.8,684.0L455.0,694.4L456.2,684.2L457.4,689.1L458.6,689.0L459.8,693.2L461.0,693.1L462.2,687.4L463.4,688.1L464.6,687.5L465.8,683.1L467.0,689.8L468.2,685.2L469.4,688.0L470.6,710.2L471.8,707.6L473.0,706.9L474.2,717.8L475.4,716.8L476.6,717.7L477.8,717.8L479.0,717.2L480.2,716.9L481.4,716.1L482.6,717.9L483.8,717.9L485.0,716.1L486.2,717.0L487.4,717.4L488.6,716.4L489.8,715.5L491.0,716.7L492.2,716.4L493.4,715.5L494.6,715.4L495.8,714.9L497.0,716.6L498.2,715.5L499.4,716.6L500.6,715.6L501.8,715.5L503.0,714.7L504.2,709.5L505.4,701.1L506.6,706.2L507.8,713.1L509.0,716.2L510.2,717.0L511.4,716.9L512.6,715.2L513.8,715.7L515.0,715.4L516.2,717.2L517.4,716.3L518.6,715.1L519.8,714.9L521.0,710.0L522.2,703.7L523.4,706.1L524.6,712.9L525.8,715.9L527.0,716.3L528.2,716.7L529.4,715.1L530.6,715.6L531.8,714.2L533.0,713.9L534.2,715.1L535.4,713.6L536.6,714.6L537.8,714.2L539.0,714.0L540.2,713.4L541.4,713.0L542.6,711.5L543.8,709.7L545.0,710.9L546.2,708.6L547.4,709.5L548.6,708.7L549.8,708.5L551.0,709.8L552.2,710.5L553.4,711.4L554.6,712.3L555.8,714.5L557.0,684.5L558.2,689.1L559.4,685.9L560.6,684.6L561.8,693.9L563.0,682.5L564.2,687.6L565.4,684.0L566.6,691.8L567.8,692.9L569.0,690.9L570.2,689.1L571.4,691.6L572.6,691.6L573.8,692.8L575.0,688.5L576.2,690.0L577.4,688.5L578.6,683.9L579.8,689.7L581.0,694.4L582.2,690.6L583.4,686.1L584.6,693.7L585.8,695.3L587.0,710.7L588.2,718.1L589.4,703.9L590.6,692.3L591.8,686.0L593.0,691.9L594.2,688.9L595.4,691.4L596.6,688.5L597.8,687.6L599.0,688.5L600.2,689.7L601.4,686.4L602.6,685.8L603.8,688.0L605.0,685.4L606.2,689.8L607.4,691.7L608.6,684.0L609.8,688.1L611.0,686.2L612.2,690.6L613.4,693.9L614.6,693.8L615.8,682.8L617.0,682.9L618.2,685.6L619.4,686.0L620.6,692.1L621.8,686.1L623.0,687.3L624.2,690.4L625.4,693.7L626.6,684.2L627.8,694.2L629.0,682.0L630.2,686.3L631.4,694.3L632.6,693.3L633.8,685.3L635.0,693.8L636.2,685.2L637.4,688.6L638.6,685.4L639.8,684.1L641.0,692.3L642.2,689.8L643.4,692.6L644.6,686.5L645.8,682.5L647.0,693.6L648.2,690.2L649.4,686.8L650.6,689.7L651.8,684.2L653.0,689.1L654.2,698.5L655.4,708.8L656.6,717.2L657.8,703.9L659.0,682.7L660.2,688.5L661.4,684.4L662.6,684.7L663.8,683.2L665.0,692.0L666.2,689.8L667.4,692.5L668.6,693.1L669.8,686.9L671.0,694.0L672.2,687.3L673.4,682.5L674.6,691.2L675.8,693.3L677.0,688.6L678.2,686.9L679.4,691.2L680.6,686.0L681.8,682.2L683.0,691.2L684.2,683.9L685.4,686.3L686.6,684.9L687.8,686.9L689.0,712.9L690.2,713.1L691.4,707.1L692.6,713.3L693.8,714.3L695.0,705.5L696.2,705.7L697.4,713.3L698.6,714.3L699.8,714.1L701.0,714.0L702.2,714.7L703.4,707.7L704.6,712.9L705.8,703.5L707.0,704.8L708.2,703.8L709.4,714.3L710.6,713.8L711.8,708.9L713.0,707.1L714.2,708.4L715.4,708.4L716.6,713.6L717.8,707.0L719.0,705.5L720.2,704.6L721.4,713.8L722.6,689.7L723.8,688.8L725.0,684.1L726.2,689.6L727.4,682.4L728.6,687.6L729.8,692.1L731.0,694.0L732.2,694.2L733.4,685.5L734.6,693.8L735.8,690.9L737.0,686.9L738.2,685.0L739.4,689.5L740.6,689.4L741.8,691.4L743.0,684.3L744.2,693.7L745.4,691.3L746.6,687.7L747.8,694.1L749.0,682.6L750.2,683.3L751.4,685.9L752.6,686.6L753.8,682.4L755.0,692.9L756.2,691.0L757.4,692.8L758.6,690.8L759.8,683.8L761.0,691.9L762.2,686.7L763.4,691.6L764.6,694.3L765.8,687.4L767.0,690.7L768.2,683.4L769.4,688.9L770.6,682.3L771.8,690.0L773.0,684.1L774.2,684.8L775.4,682.9L776.6,686.6L777.8,708.0L779.0,715.9L780.2,697.6L781.4,689.6L782.6,688.1L783.8,692.6L785.0,682.8L786.2,682.3L787.4,694.3L788.6,682.8L789.8,687.9L791.0,689.9L792.2,685.9L793.4,689.3L794.6,682.2L795.8,681.8L797.0,692.2L798.2,687.9L799.4,684.1L800.6,692.4L801.8,692.0L803.0,689.9L804.2,689.2L805.4,694.4L806.6,686.0L807.8,691.0L809.0,687.2L810.2,684.8L811.4,687.8L812.6,693.6L813.8,685.4L815.0,693.1L816.2,688.7L817.4,687.1L818.6,691.3L819.8,690.4L821.0,686.8L822.2,691.3L823.4,690.5L824.6,704.4L825.8,717.5L827.0,705.3L828.2,692.8L829.4,692.0L830.6,686.0L831.8,693.2L833.0,688.8L834.2,690.0L835.4,691.8L836.6,688.7L837.8,683.1L839.0,686.7L840.2,687.9L841.4,689.6L842.6,689.5L843.8,690.4L845.0,689.8L846.2,690.5L846.2,722.4Z" fill="#0b7236"/>
<path d="M167.0,722.4L167.0,721.7L168.2,721.6L169.4,721.8L170.6,721.6L171.8,721.6L173.0,721.4L174.2,721.8L175.4,721.7L176.6,721.6L177.8,721.5L179.0,721.6L180.2,721.7L181.4,721.5L182.6,721.6L183.8,721.8L185.0,721.5L186.2,721.6L187.4,721.6L188.6,721.5L189.8,721.7L191.0,721.7L192.2,721.8L193.4,721.8L194.6,721.5L195.8,721.7L197.0,721.7L198.2,721.6L199.4,721.7L200.6,721.6L201.8,721.4L203.0,721.7L204.2,721.8L205.4,721.7L206.6,721.8L207.8,721.6L209.0,721.7L210.2,721.6L211.4,721.7L212.6,721.8L213.8,721.6L215.0,721.5L216.2,721.7L217.4,721.7L218.6,721.5L219.8,721.7L221.0,721.8L222.2,721.4L223.4,721.4L224.6,721.7L225.8,721.5L227.0,721.8L228.2,721.5L229.4,721.7L230.6,721.6L231.8,721.8L233.0,721.7L234.2,711.9L235.4,710.2L236.6,709.1L237.8,710.5L239.0,711.9L240.2,708.6L241.4,711.4L242.6,711.2L243.8,710.7L245.0,712.3L246.2,708.6L247.4,709.9L248.6,709.9L249.8,708.5L251.0,713.5L252.2,708.7L253.4,708.8L254.6,711.1L255.8,710.9L257.0,713.8L258.2,710.3L259.4,708.3L260.6,712.3L261.8,712.4L263.0,713.4L264.2,708.5L265.4,713.5L266.6,708.6L267.8,713.3L269.0,712.1L270.2,711.9L271.4,710.7L272.6,709.2L273.8,711.0L275.0,709.8L276.2,713.1L277.4,713.4L278.6,712.5L279.8,712.4L281.0,708.3L282.2,711.2L283.4,712.4L284.6,712.1L285.8,710.1L287.0,708.2L288.2,709.1L289.4,713.1L290.6,709.1L291.8,712.6L293.0,709.1L294.2,711.1L295.4,710.8L296.6,713.5L297.8,719.9L299.0,720.2L300.2,720.8L301.4,720.6L302.6,706.2L303.8,706.0L305.0,707.6L306.2,700.0L307.4,699.8L308.6,700.0L309.8,703.9L311.0,704.0L312.2,700.4L313.4,704.2L314.6,705.5L315.8,701.8L317.0,702.1L318.2,705.1L319.4,704.8L320.6,701.0L321.8,706.3L323.0,699.9L324.2,700.3L325.4,708.3L326.6,702.7L327.8,707.5L329.0,701.9L330.2,705.9L331.4,712.6L332.6,719.4L333.8,722.1L335.0,720.9L336.2,712.5L337.4,703.9L338.6,706.1L339.8,702.9L341.0,706.4L342.2,700.9L343.4,702.1L344.6,708.7L345.8,700.8L347.0,707.3L348.2,702.0L349.4,703.6L350.6,700.2L351.8,706.4L353.0,708.1L354.2,706.6L355.4,704.4L356.6,704.3L357.8,702.2L359.0,702.5L360.2,700.2L361.4,704.8L362.6,701.9L363.8,705.8L365.0,706.8L366.2,718.7L367.4,721.7L368.6,720.7L369.8,715.9L371.0,699.5L372.2,700.1L373.4,705.2L374.6,708.7L375.8,707.6L377.0,701.1L378.2,704.3L379.4,705.3L380.6,701.2L381.8,708.1L383.0,700.4L384.2,703.0L385.4,706.2L386.6,702.8L387.8,704.3L389.0,706.4L390.2,707.0L391.4,701.6L392.6,705.4L393.8,701.7L395.0,703.6L396.2,699.6L397.4,704.1L398.6,704.9L399.8,700.9L401.0,706.0L402.2,706.9L403.4,700.5L404.6,699.5L405.8,702.7L407.0,701.1L408.2,706.0L409.4,703.3L410.6,704.6L411.8,707.7L413.0,705.3L414.2,703.2L415.4,705.7L416.6,706.8L417.8,707.8L419.0,707.9L420.2,706.1L421.4,703.5L422.6,699.5L423.8,706.8L425.0,701.1L426.2,707.2L427.4,700.3L428.6,704.0L429.8,700.1L431.0,699.8L432.2,699.7L433.4,705.1L434.6,707.2L435.8,700.9L437.0,705.0L438.2,706.4L439.4,703.5L440.6,707.6L441.8,705.9L443.0,702.6L444.2,703.0L445.4,701.5L446.6,707.7L447.8,704.6L449.0,707.9L450.2,708.2L451.4,707.5L452.6,701.2L453.8,699.9L455.0,700.1L456.2,707.2L457.4,707.4L458.6,706.3L459.8,707.0L461.0,700.4L462.2,703.8L463.4,703.6L464.6,699.5L465.8,706.3L467.0,701.6L468.2,708.3L469.4,699.6L470.6,716.5L471.8,714.8L473.0,715.6L474.2,721.0L475.4,720.9L476.6,720.9L477.8,721.2L479.0,720.7L480.2,720.8L481.4,721.0L482.6,720.6L483.8,721.1L485.0,720.9L486.2,720.8L487.4,721.2L488.6,720.6L489.8,721.5L491.0,721.6L492.2,721.8L493.4,721.5L494.6,721.6L495.8,721.6L497.0,721.8L498.2,721.4L499.4,721.7L500.6,721.5L501.8,721.5L503.0,721.5L504.2,721.6L505.4,721.8L506.6,721.8L507.8,721.6L509.0,721.6L510.2,721.5L511.4,721.4L512.6,721.8L513.8,721.5L515.0,721.8L516.2,721.6L517.4,721.5L518.6,721.6L519.8,721.6L521.0,721.5L522.2,721.8L523.4,721.7L524.6,721.6L525.8,721.6L527.0,721.4L528.2,721.6L529.4,721.5L530.6,721.7L531.8,721.8L533.0,721.7L534.2,721.5L535.4,721.5L536.6,721.7L537.8,721.5L539.0,721.6L540.2,721.7L541.4,721.5L542.6,721.7L543.8,721.7L545.0,721.4L546.2,721.5L547.4,721.6L548.6,721.8L549.8,721.6L551.0,721.6L552.2,721.6L553.4,721.7L554.6,721.5L555.8,721.6L557.0,705.3L558.2,706.8L559.4,705.4L560.6,703.2L561.8,700.3L563.0,702.0L564.2,703.9L565.4,703.3L566.6,700.5L567.8,702.2L569.0,708.6L570.2,705.3L571.4,706.7L572.6,704.3L573.8,707.2L575.0,703.4L576.2,700.4L577.4,701.7L578.6,708.0L579.8,706.7L581.0,707.4L582.2,706.9L583.4,703.3L584.6,701.4L585.8,705.5L587.0,720.1L588.2,722.1L589.4,715.8L590.6,702.0L591.8,702.0L593.0,701.5L594.2,702.4L595.4,706.7L596.6,708.6L597.8,704.6L599.0,701.5L600.2,701.5L601.4,708.4L602.6,703.6L603.8,700.2L605.0,708.8L606.2,701.3L607.4,702.1L608.6,704.1L609.8,705.4L611.0,700.3L612.2,706.2L613.4,702.0L614.6,704.2L615.8,707.4L617.0,702.0L618.2,703.4L619.4,707.2L620.6,708.2L621.8,700.9L623.0,702.0L624.2,705.3L625.4,700.7L626.6,708.0L627.8,705.1L629.0,700.6L630.2,708.2L631.4,708.9L632.6,700.4L633.8,708.9L635.0,707.4L636.2,701.4L637.4,702.7L638.6,700.4L639.8,703.2L641.0,702.5L642.2,708.5L643.4,703.0L644.6,703.3L645.8,702.0L647.0,706.4L648.2,701.6L649.4,701.6L650.6,701.1L651.8,701.0L653.0,706.7L654.2,707.5L655.4,719.3L656.6,722.0L657.8,718.5L659.0,702.3L660.2,703.0L661.4,702.3L662.6,701.8L663.8,701.0L665.0,703.8L666.2,702.8L667.4,704.4L668.6,705.7L669.8,707.7L671.0,708.9L672.2,704.7L673.4,705.2L674.6,700.4L675.8,707.5L677.0,701.2L678.2,708.5L679.4,700.4L680.6,700.5L681.8,707.6L683.0,708.7L684.2,700.9L685.4,702.7L686.6,707.8L687.8,706.4L689.0,718.8L690.2,719.1L691.4,719.4L692.6,717.6L693.8,717.7L695.0,717.6L696.2,718.8L697.4,719.2L698.6,718.3L699.8,718.6L701.0,718.8L702.2,717.6L703.4,717.6L704.6,718.9L705.8,717.5L707.0,718.9L708.2,718.9L709.4,718.8L710.6,718.4L711.8,719.0L713.0,717.9L714.2,719.3L715.4,719.0L716.6,718.3L717.8,718.6L719.0,718.8L720.2,719.4L721.4,718.9L722.6,708.0L723.8,704.9L725.0,703.2L726.2,703.2L727.4,701.8L728.6,704.8L729.8,707.5L731.0,702.3L732.2,707.7L733.4,704.9L734.6,703.2L735.8,705.1L737.0,708.3L738.2,704.4L739.4,701.2L740.6,704.9L741.8,706.5L743.0,700.9L744.2,702.0L745.4,701.3L746.6,706.3L747.8,705.0L749.0,702.7L750.2,701.7L751.4,707.1L752.6,701.4L753.8,705.7L755.0,703.8L756.2,705.0L757.4,708.2L758.6,705.9L759.8,704.7L761.0,703.8L762.2,704.7L763.4,707.3L764.6,704.3L765.8,707.4L767.0,700.8L768.2,708.9L769.4,706.1L770.6,707.5L771.8,706.5L773.0,702.0L774.2,702.9L775.4,703.3L776.6,710.7L777.8,718.8L779.0,721.7L780.2,714.8L781.4,704.6L782.6,702.0L783.8,706.8L785.0,708.7L786.2,702.1L787.4,701.5L788.6,705.1L789.8,700.7L791.0,706.0L792.2,701.2L793.4,706.2L794.6,701.8L795.8,704.0L797.0,702.3L798.2,702.2L799.4,703.4L800.6,705.8L801.8,705.0L803.0,704.2L804.2,709.1L805.4,703.4L806.6,704.3L807.8,704.6L809.0,700.7L810.2,708.1L811.4,708.0L812.6,702.4L813.8,706.6L815.0,707.1L816.2,706.4L817.4,701.7L818.6,704.0L819.8,702.0L821.0,706.8L822.2,701.1L823.4,707.5L824.6,715.7L825.8,722.2L827.0,719.0L828.2,708.9L829.4,707.3L830.6,709.1L831.8,703.3L833.0,708.3L834.2,708.1L835.4,701.1L836.6,707.5L837.8,707.2L839.0,707.3L840.2,708.4L841.4,702.7L842.6,706.7L843.8,702.0L845.0,704.5L846.2,708.9L846.2,722.4Z" fill="#0a2f62"/>
<path d="M847.4,722.4L847.4,686.8L848.6,678.5L849.8,682.1L851.0,682.5L852.2,687.6L853.4,677.5L854.6,691.0L855.8,681.9L857.0,689.8L858.2,688.9L859.4,691.2L860.6,691.0L861.8,689.0L863.0,705.9L864.2,687.0L865.4,690.7L866.6,681.9L867.8,686.1L869.0,685.1L870.2,691.0L871.4,684.5L872.6,689.0L873.8,689.5L875.0,682.3L876.2,686.2L877.4,680.3L878.6,704.6L879.8,695.8L881.0,679.2L882.2,689.5L883.4,681.7L884.6,685.8L885.8,691.2L887.0,681.4L888.2,685.5L889.4,691.2L890.6,677.0L891.8,685.4L893.0,688.4L894.2,677.2L895.4,680.9L896.6,688.0L897.8,679.2L899.0,683.1L900.2,676.8L901.4,688.3L902.6,690.0L903.8,691.0L905.0,691.2L906.2,686.5L907.4,686.6L908.6,679.3L909.8,686.2L911.0,690.7L912.2,698.5L913.4,701.5L914.6,683.4L915.8,685.6L917.0,671.4L918.2,686.1L919.4,683.9L920.6,686.9L921.8,684.5L923.0,690.6L924.2,684.4L925.4,685.1L926.6,722.4L927.6,721.4L928.4,714.4L928.9,700.4L929.5,716.4L930.2,721.9L930.2,722.4Z" fill="#ffffff"/>
<path d="M847.4,722.4L847.4,696.3L848.6,690.0L849.8,698.9L851.0,694.9L852.2,690.4L853.4,698.0L854.6,698.8L855.8,696.0L857.0,692.5L858.2,691.7L859.4,695.6L860.6,696.2L861.8,698.7L863.0,718.4L864.2,691.9L865.4,696.3L866.6,689.5L867.8,692.6L869.0,694.7L870.2,691.2L871.4,696.5L872.6,693.5L873.8,694.9L875.0,691.8L876.2,693.8L877.4,697.8L878.6,716.5L879.8,708.6L881.0,691.2L882.2,695.4L883.4,697.1L884.6,695.8L885.8,698.5L887.0,698.3L888.2,698.1L889.4,693.5L890.6,692.6L891.8,696.6L893.0,690.4L894.2,690.4L895.4,690.5L896.6,690.6L897.8,695.3L899.0,693.3L900.2,689.7L901.4,697.6L902.6,692.0L903.8,698.3L905.0,691.7L906.2,691.0L907.4,693.8L908.6,692.2L909.8,696.1L911.0,697.2L912.2,709.8L913.4,709.9L914.6,692.1L915.8,689.3L917.0,695.6L918.2,692.1L919.4,695.3L920.6,693.3L921.8,689.9L923.0,696.6L924.2,694.1L925.4,698.0L926.6,722.4L927.6,721.8L928.4,717.6L928.9,709.2L929.5,718.8L930.2,722.1L930.2,722.4Z" fill="#08d22c"/>
<path d="M847.4,722.4L847.4,706.5L848.6,706.1L849.8,709.7L851.0,709.1L852.2,709.9L853.4,710.4L854.6,706.5L855.8,710.2L857.0,709.4L858.2,707.5L859.4,706.7L860.6,706.0L861.8,707.3L863.0,722.0L864.2,711.0L865.4,705.7L866.6,708.6L867.8,705.7L869.0,706.6L870.2,710.7L871.4,705.8L872.6,707.0L873.8,709.1L875.0,710.7L876.2,709.9L877.4,710.8L878.6,721.7L879.8,717.5L881.0,708.3L882.2,709.6L883.4,709.6L884.6,710.9L885.8,710.5L887.0,706.2L888.2,707.6L889.4,710.3L890.6,707.0L891.8,709.8L893.0,706.1L894.2,707.0L895.4,706.0L896.6,710.3L897.8,707.7L899.0,711.4L900.2,706.6L901.4,708.0L902.6,711.1L903.8,704.6L905.0,710.3L906.2,705.5L907.4,706.9L908.6,708.5L909.8,710.5L911.0,709.1L912.2,720.4L913.4,719.9L914.6,711.2L915.8,707.5L917.0,709.5L918.2,710.3L919.4,706.9L920.6,707.8L921.8,710.4L923.0,705.4L924.2,709.8L925.4,707.5L926.6,722.4L927.6,722.4L928.4,722.4L928.9,722.4L929.5,722.4L930.2,722.4L930.2,722.4Z" fill="#2f59d6"/>

 <rect x="167" y="722.3" width="680" height="0.9" fill="#0a3166"/>
 <rect x="473" y="636" width="15.5" height="92" fill="#2a5596" fill-opacity="0.78"/>
 <rect x="607.2" y="636" width="3.8" height="92" fill="#6a6a6a" fill-opacity="0.55"/>
 <g fill="#fff">
  <rect x="166.4" y="724" width="1.2" height="3.5"/><rect x="307.8" y="723" width="1.2" height="3.5"/>
  <rect x="451.1" y="723" width="1.2" height="4"/><rect x="593.9" y="723" width="1.2" height="4"/>
  <rect x="737.2" y="723" width="1.2" height="4"/><rect x="880.2" y="723" width="1.2" height="4"/>
 </g>
 <!-- cue lines -->
 <g>
  <rect x="165.1" y="636" width="2.4" height="82" fill="#4a8ef0"/><path d="M166.3,715.5 l8.5,12.5 h-17 z" fill="#4a8ef0"/>
  <rect x="199.0" y="636" width="2.4" height="82" fill="#4a8ef0"/><path d="M200.2,715.5 l8.5,12.5 h-17 z" fill="#4a8ef0"/>
  <rect x="232.9" y="636" width="2.4" height="82" fill="#1fd1c1"/><path d="M234.1,715.5 l8.5,12.5 h-17 z" fill="#1fd1c1"/>
  <rect x="300.8" y="636" width="2.4" height="82" fill="#e53935"/><path d="M302,715.5 l8.5,12.5 h-17 z" fill="#e53935"/>
  <rect x="402.3" y="636" width="2.4" height="82" fill="#f5871f"/><path d="M403.5,715.5 l8.5,12.5 h-17 z" fill="#f5871f"/>
  <rect x="470.3" y="636" width="2.4" height="82" fill="#fdd835"/><path d="M471.5,715.5 l8.5,12.5 h-17 z" fill="#fdd835"/>
  <rect x="690.6" y="636" width="2.4" height="82" fill="#fdd835"/><path d="M691.8,715.5 l8.5,12.5 h-17 z" fill="#fdd835"/>
  <rect x="860.2" y="636" width="2.4" height="82" fill="#0fc45f"/><path d="M861.4,715.5 l8.5,12.5 h-17 z" fill="#0fc45f"/>
 </g>
 <rect x="166.4" y="723.5" width="1.6" height="4" fill="#fff"/>
 <rect x="845.6" y="636" width="3" height="92" fill="#fff"/>
</svg>
<div class="t" id="b162" style="left:790px;top:562px;font-size:19px;color:#fff">162</div>

<!-- cue labels -->
<div class="cl" style="left:155.25px;letter-spacing:0.15px">64 IN</div><div class="cb" style="left:166.25px;background:#4a8ef0"></div>
<div class="cl" style="left:252.25px;letter-spacing:0.15px">32 IN</div><div class="cb" style="left:263.25px;background:#4a8ef0"></div>
<div class="cl" style="left:349.25px">KICK MIX</div><div class="cb" style="left:360.25px;background:#1fd1c1"></div>
<div class="cl" style="left:446.25px;letter-spacing:-0.8px">DROP</div><div class="cb" style="left:457.25px;background:#e53935"></div>
<div class="cl" style="left:543.25px">FLIP</div><div class="cb" style="left:554.25px;background:#f5871f"></div>
<div class="cl" style="left:640.25px;letter-spacing:-0.5px">VOCAL</div><div class="cb" style="left:651.25px;background:#fdd835"></div>
<div class="cl" style="left:737.25px">VOCAL 2</div><div class="cb" style="left:748.25px;background:#fdd835"></div>
<div class="cl" style="left:832.9px;letter-spacing:-0.6px">LOOP OUT</div><div class="cb" style="left:845.25px;background:#0fc45f"></div>

<!-- FADER PANEL -->
<svg class="abs" style="left:1000px;top:160px" width="240" height="590" viewBox="1000 160 240 590">
 <defs>
  <linearGradient id="knobT" x1="0" y1="0" x2="0" y2="1">
   <stop offset="0" stop-color="#39393b"/><stop offset="0.1" stop-color="#2c2c2e"/><stop offset="0.55" stop-color="#202022"/><stop offset="1" stop-color="#111113"/>
  </linearGradient>
  <linearGradient id="knobB" x1="0" y1="0" x2="0" y2="1">
   <stop offset="0" stop-color="#18181a"/><stop offset="0.5" stop-color="#232325"/><stop offset="1" stop-color="#19191b"/>
  </linearGradient>
  <linearGradient id="knobM1" x1="0" y1="0" x2="0" y2="1"><stop offset="0" stop-color="#1b1b1d"/><stop offset="1" stop-color="#2b2b2d"/></linearGradient>
  <linearGradient id="knobM2" x1="0" y1="0" x2="0" y2="1"><stop offset="0" stop-color="#161618"/><stop offset="1" stop-color="#252527"/></linearGradient>
  <filter id="glow" x="-50%" y="-100%" width="200%" height="300%"><feGaussianBlur stdDeviation="1.6"/></filter>
 </defs>
 <rect x="1012" y="171" width="203.5" height="557.5" fill="#101012"/>
 <rect x="1201" y="171" width="1.5" height="557.5" fill="#050506"/>
 <rect x="1202.5" y="171" width="13" height="557.5" fill="#0d0d0f"/>
 <!-- frame -->
 <rect x="1063" y="190.8" width="100.6" height="520" rx="11.5" fill="#2b2b2d"/>
 <rect x="1064" y="191.8" width="98.6" height="518" rx="10.5" fill="#0a0a0c"/>
 <rect x="1065.6" y="193.4" width="95.4" height="514.8" rx="9" fill="#171719"/>
 <rect x="1070.6" y="198" width="85.6" height="504.4" rx="5.5" fill="#09090b"/>
 <rect x="1073.1" y="200.2" width="80.9" height="499.8" rx="3.5" fill="#2d2d2f"/>
 <rect x="1164.5" y="205" width="0.9" height="495" fill="#2a2a2c"/>
 <!-- ticks -->
 <g id="ticks"><rect x="1074.3" y="246.74" width="79.7" height="4.8" fill="#151517"/><rect x="1074.3" y="247.64" width="79.7" height="3.0" fill="#e4e4e4"/><rect x="1074.3" y="262.81" width="79.7" height="3.7" fill="#151517"/><rect x="1074.3" y="263.71" width="79.7" height="1.9" fill="#bebebe"/><rect x="1074.3" y="278.33" width="79.7" height="3.7" fill="#151517"/><rect x="1074.3" y="279.23" width="79.7" height="1.9" fill="#bebebe"/><rect x="1074.3" y="293.85" width="79.7" height="3.7" fill="#151517"/><rect x="1074.3" y="294.75" width="79.7" height="1.9" fill="#bebebe"/><rect x="1074.3" y="309.37" width="79.7" height="3.7" fill="#151517"/><rect x="1074.3" y="310.27" width="79.7" height="1.9" fill="#bebebe"/><rect x="1074.3" y="324.89" width="79.7" height="3.7" fill="#151517"/><rect x="1074.3" y="325.79" width="79.7" height="1.9" fill="#bebebe"/><rect x="1074.3" y="340.41" width="79.7" height="3.7" fill="#151517"/><rect x="1074.3" y="341.31" width="79.7" height="1.9" fill="#bebebe"/><rect x="1074.3" y="355.93" width="79.7" height="3.7" fill="#151517"/><rect x="1074.3" y="356.83" width="79.7" height="1.9" fill="#bebebe"/><rect x="1074.3" y="371.45" width="79.7" height="3.7" fill="#151517"/><rect x="1074.3" y="372.35" width="79.7" height="1.9" fill="#bebebe"/><rect x="1074.3" y="386.97" width="79.7" height="3.7" fill="#151517"/><rect x="1074.3" y="387.87" width="79.7" height="1.9" fill="#bebebe"/><rect x="1074.3" y="402.49" width="79.7" height="3.7" fill="#151517"/><rect x="1074.3" y="403.39" width="79.7" height="1.9" fill="#bebebe"/><rect x="1074.3" y="418.01" width="79.7" height="3.7" fill="#151517"/><rect x="1074.3" y="418.91" width="79.7" height="1.9" fill="#bebebe"/><rect x="1074.3" y="433.53" width="79.7" height="3.7" fill="#151517"/><rect x="1074.3" y="434.43" width="79.7" height="1.9" fill="#bebebe"/><rect x="1074.3" y="448.50" width="79.7" height="4.8" fill="#151517"/><rect x="1074.3" y="449.40" width="79.7" height="3.0" fill="#e4e4e4"/><rect x="1074.3" y="464.57" width="79.7" height="3.7" fill="#151517"/><rect x="1074.3" y="465.47" width="79.7" height="1.9" fill="#bebebe"/><rect x="1074.3" y="480.09" width="79.7" height="3.7" fill="#151517"/><rect x="1074.3" y="480.99" width="79.7" height="1.9" fill="#bebebe"/><rect x="1074.3" y="495.61" width="79.7" height="3.7" fill="#151517"/><rect x="1074.3" y="496.51" width="79.7" height="1.9" fill="#bebebe"/><rect x="1074.3" y="511.13" width="79.7" height="3.7" fill="#151517"/><rect x="1074.3" y="512.03" width="79.7" height="1.9" fill="#bebebe"/><rect x="1074.3" y="526.65" width="79.7" height="3.7" fill="#151517"/><rect x="1074.3" y="527.55" width="79.7" height="1.9" fill="#bebebe"/><rect x="1074.3" y="542.17" width="79.7" height="3.7" fill="#151517"/><rect x="1074.3" y="543.07" width="79.7" height="1.9" fill="#bebebe"/><rect x="1074.3" y="557.69" width="79.7" height="3.7" fill="#151517"/><rect x="1074.3" y="558.59" width="79.7" height="1.9" fill="#bebebe"/><rect x="1074.3" y="573.21" width="79.7" height="3.7" fill="#151517"/><rect x="1074.3" y="574.11" width="79.7" height="1.9" fill="#bebebe"/><rect x="1074.3" y="588.73" width="79.7" height="3.7" fill="#151517"/><rect x="1074.3" y="589.63" width="79.7" height="1.9" fill="#bebebe"/><rect x="1074.3" y="604.25" width="79.7" height="3.7" fill="#151517"/><rect x="1074.3" y="605.15" width="79.7" height="1.9" fill="#bebebe"/><rect x="1074.3" y="619.77" width="79.7" height="3.7" fill="#151517"/><rect x="1074.3" y="620.67" width="79.7" height="1.9" fill="#bebebe"/><rect x="1074.3" y="635.29" width="79.7" height="3.7" fill="#151517"/><rect x="1074.3" y="636.19" width="79.7" height="1.9" fill="#bebebe"/><rect x="1074.3" y="650.26" width="79.7" height="4.8" fill="#151517"/><rect x="1074.3" y="651.16" width="79.7" height="3.0" fill="#e4e4e4"/></g>
 <!-- slot -->
 <rect x="1107.2" y="226.5" width="11.5" height="445" rx="1.5" fill="#050505"/>
 <!-- knob -->
 <rect x="1150.5" y="288" width="3.6" height="80" fill="#141416" opacity="0.85"/>
 <rect x="1078" y="286.8" width="74" height="82" rx="3.2" fill="#0e0e10"/>
 <rect x="1078.5" y="316" width="6" height="28" fill="#0a0a0b"/>
 <rect x="1078.9" y="287.7" width="72.3" height="30" rx="2.8" fill="url(#knobT)"/>
 <rect x="1083" y="317" width="70" height="10.6" fill="url(#knobM1)"/>
 <rect x="1083" y="333" width="70.4" height="10.6" fill="url(#knobM2)"/>
 <rect x="1078.9" y="343.4" width="72.3" height="24" rx="2.8" fill="url(#knobB)"/>
 <path d="M1078.3,325.8 L1082.6,327.5 L1152.9,327.5 L1152.9,333 L1083,333 L1078.3,329.5 Z" fill="#f6f6f6"/>
 <!-- scale -->
 <rect x="1038" y="218.3" width="7.3" height="1.6" fill="#d8d8d8"/>
 <path d="M1041,228.5 L1051,245.5 L1030.5,245.5 Z" fill="#5e5e5e" stroke="#8a8a8a" stroke-width="1"/>
 <rect x="1041.6" y="252" width="1.4" height="189" fill="#cfcfcf"/>
 <rect x="1041.9" y="463" width="1.4" height="190.5" fill="#cfcfcf"/>
 <path d="M1032.5,656.5 L1053.5,656.5 L1043,675.5 Z" fill="#5e5e5e" stroke="#8a8a8a" stroke-width="1"/>
 <rect x="1040" y="684.5" width="8" height="1.8" fill="#e8e8e8"/><rect x="1043.1" y="681.4" width="1.8" height="8" fill="#e8e8e8"/>
 <rect x="1030" y="444.5" width="24" height="12" rx="2" fill="#fff" opacity="0.55" filter="url(#glow)"/>
 <rect x="1031" y="445.5" width="22" height="10" rx="1.5" fill="#fff"/>
 <circle cx="1021.2" cy="452.3" r="2.4" fill="none" stroke="#f0f0f0" stroke-width="1.7"/>
 <!-- screw -->
 <circle cx="1185.3" cy="526.7" r="12.2" fill="#242426"/>
 <circle cx="1185.3" cy="526.7" r="11" fill="#050506"/>
 <circle cx="1185.3" cy="526.7" r="7.4" fill="#2a2a2c"/>
 <circle cx="1185.3" cy="526.7" r="6.4" fill="#161618"/>
 <circle cx="1185.3" cy="526.7" r="4.6" fill="#0c0c0e"/>
 <path d="M1184.2,524.6 l4.2,2.3 l-3.8,1.9 z" fill="#6a6a6a"/>
</svg>
</body></html>
